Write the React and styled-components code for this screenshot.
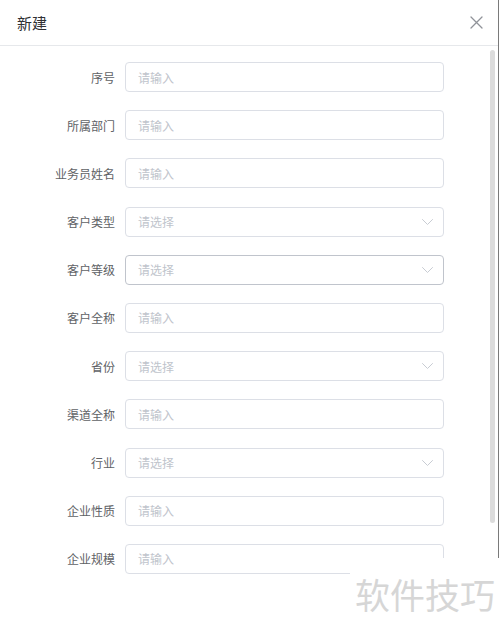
import styled, { createGlobalStyle } from "styled-components";

const GlobalStyle = createGlobalStyle`
  html, body {
    margin: 0;
    padding: 0;
    background: #fff;
  }
  body {
    font-family: "Noto Sans CJK SC", "Noto Sans", sans-serif;
  }
`;

const Dialog = styled.div`
  width: 498px;
  height: 633px;
  border-right: 1px solid #7a7a7a;
  background: #fff;
  display: flex;
  flex-direction: column;
  position: relative;
`;

const Header = styled.header`
  height: 45px;
  flex: none;
  border-bottom: 1px solid #e6e8eb;
  display: flex;
  align-items: center;
  justify-content: space-between;
  padding: 0 15px 0 17px;
`;

const Title = styled.h2`
  margin: 0;
  font-size: 15px;
  font-weight: 400;
  color: #303133;
  line-height: 1;
`;

const CloseButton = styled.button`
  border: none;
  background: none;
  padding: 0;
  width: 13px;
  height: 13px;
  display: grid;
  place-items: center;
  cursor: pointer;
`;

const Body = styled.div`
  height: 544px;
  flex: none;
  overflow: hidden;
  padding: 16px 0 71px;
  box-sizing: border-box;
`;

// the page's scroll thumb, drawn over the body's right edge
const ScrollThumb = styled.div`
  position: absolute;
  left: 490px;
  top: 50px;
  width: 5px;
  height: 473px;
  border-radius: 3px;
  background: #dcdcdc;
`;

const FormItem = styled.div`
  display: flex;
  align-items: center;
  margin-bottom: 18.2px;
`;

const Label = styled.label`
  width: 125px;
  padding-right: 10px;
  box-sizing: border-box;
  text-align: right;
  font-size: 12px;
  color: #606266;
  flex: none;
`;

const Field = styled.div`
  width: 319px;
  height: 30px;
  box-sizing: border-box;
  border: 1px solid ${(p) => (p.$hover ? "#c0c4cc" : "#dcdfe6")};
  border-radius: 4px;
  display: flex;
  align-items: center;
  padding: 0 12px;
  font-size: 12px;
  color: #c0c4cc;
`;

const Arrow = styled.svg`
  margin-left: auto;
  margin-right: -2px;
`;

const Watermark = styled.div`
  position: absolute;
  left: 350px;
  top: 558px;
  right: -2px;
  bottom: 0;
  background: #fff;
  padding: 18px 0 0 5px;
  font-size: 35px;
  line-height: 1;
  color: #d6d6d6;
  white-space: nowrap;
`;

const fields = [
  { label: "序号" },
  { label: "所属部门" },
  { label: "业务员姓名" },
  { label: "客户类型", select: true },
  { label: "客户等级", select: true, hover: true },
  { label: "客户全称" },
  { label: "省份", select: true },
  { label: "渠道全称" },
  { label: "行业", select: true },
  { label: "企业性质" },
  { label: "企业规模" },
];

function ChevronDown() {
  return (
    <Arrow width="11" height="6" viewBox="0 0 11 6" fill="none">
      <polyline
        points="0.5,0.5 5.5,5.5 10.5,0.5"
        stroke="#c8ccd3"
        strokeWidth="1"
        strokeLinecap="round"
        strokeLinejoin="round"
      />
    </Arrow>
  );
}

export default function App() {
  return (
    <>
      <GlobalStyle />
      <Dialog>
        <Header>
          <Title>新建</Title>
          <CloseButton type="button" aria-label="close">
            <svg width="13" height="13" viewBox="0 0 13 13">
              <path
                d="M1 1 L12 12 M12 1 L1 12"
                stroke="#909399"
                strokeWidth="1.3"
                strokeLinecap="round"
              />
            </svg>
          </CloseButton>
        </Header>
        <Body>
          {fields.map((f) => (
            <FormItem key={f.label}>
              <Label>{f.label}</Label>
              <Field $hover={f.hover}>
                {f.select ? "请选择" : "请输入"}
                {f.select && <ChevronDown />}
              </Field>
            </FormItem>
          ))}
        </Body>
        <ScrollThumb />
        <Watermark>软件技巧</Watermark>
      </Dialog>
    </>
  );
}
